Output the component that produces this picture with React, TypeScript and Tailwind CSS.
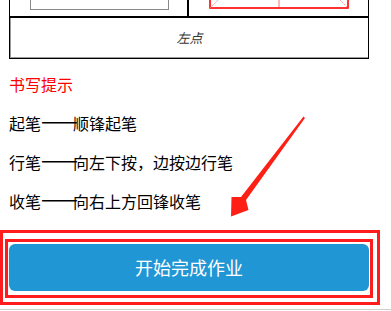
import React from "react";

function Dash() {
  return (
    <span className="inline-block w-[32px] text-center align-top text-[22px] leading-[20px] tracking-[-1px] -translate-y-[4px]">
      ——
    </span>
  );
}

export default function App() {
  const lines: [string, string][] = [
    ["起笔", "顺锋起笔"],
    ["行笔", "向左下按，边按边行笔"],
    ["收笔", "向右上方回锋收笔"],
  ];
  return (
    <div
      className="relative w-[391px] h-[311px] overflow-hidden bg-white"
      style={{ fontFamily: '"Noto Sans CJK SC", "Noto Sans", sans-serif' }}
    >
      {/* table */}
      <div className="mt-[-150px] ml-[9px] w-[360px] border border-black">
        <div className="flex h-[165px]">
          <div className="relative w-[179px] border-r-2 border-black">
            <div className="absolute left-[20px] bottom-[6px] w-[139px] h-[139px] border-[1.5px] border-[#8a8a8a]" />
          </div>
          <div className="relative flex-1">
            <svg
              className="absolute left-[20px] bottom-[7px]"
              width="140"
              height="140"
              viewBox="0 0 140 140"
            >
              <rect x="1" y="1" width="138" height="138" fill="none" stroke="#ff0000" strokeWidth="1.6" />
              <line x1="70" y1="1" x2="70" y2="139" stroke="#ff4d4d" strokeWidth="0.8" />
              <line x1="1" y1="70" x2="139" y2="70" stroke="#ff4d4d" strokeWidth="0.8" strokeDasharray="2 2" />
              <line x1="1" y1="139" x2="139" y2="1" stroke="#ff8080" strokeWidth="0.8" strokeDasharray="2 1" />
              <line x1="1" y1="1" x2="139" y2="139" stroke="#ff8080" strokeWidth="0.8" strokeDasharray="2 1" />
            </svg>
          </div>
        </div>
        <div className="h-[42px] border-t-2 border-black">
          <div className="h-full border-b border-l border-[#9a9a9a] flex items-center justify-center text-[13px] text-[#333] italic">
            左点
          </div>
        </div>
      </div>

      {/* hints */}
      <div className="pl-[9px] mt-[15px] flex flex-col gap-[19px] text-[16px] leading-[20px]">
        <div className="text-[#ff0000]">书写提示</div>
        {lines.map(([a, b]) => (
          <div key={a} className="text-black whitespace-nowrap">
            {a}
            <Dash />
            {b}
          </div>
        ))}
      </div>

      {/* button */}
      <div className="ml-[9px] mt-[33px] w-[360px] h-[47px] rounded-[6px] bg-[#2196d5] flex items-center justify-center text-white text-[18px]">
        开始完成作业
      </div>
      <div className="mt-[18px] h-px bg-[#d0d0d0]" />

      {/* annotation overlays */}
      <div className="absolute left-0 top-[230px] w-[380px] h-[75px] border-[3px] border-[#ff1c1c]" />
      <div className="absolute left-[5px] top-[239px] w-[368px] h-[59px] border-[3px] border-[#ff1c1c]" />
      <svg className="absolute left-0 top-0" width="391" height="311" viewBox="0 0 391 311">
        <polygon
          points="303.5,116.5 305,118 246,200 248.5,210 231,216.5 231.5,197 241,197"
          fill="#ff2015"
        />
      </svg>
    </div>
  );
}
